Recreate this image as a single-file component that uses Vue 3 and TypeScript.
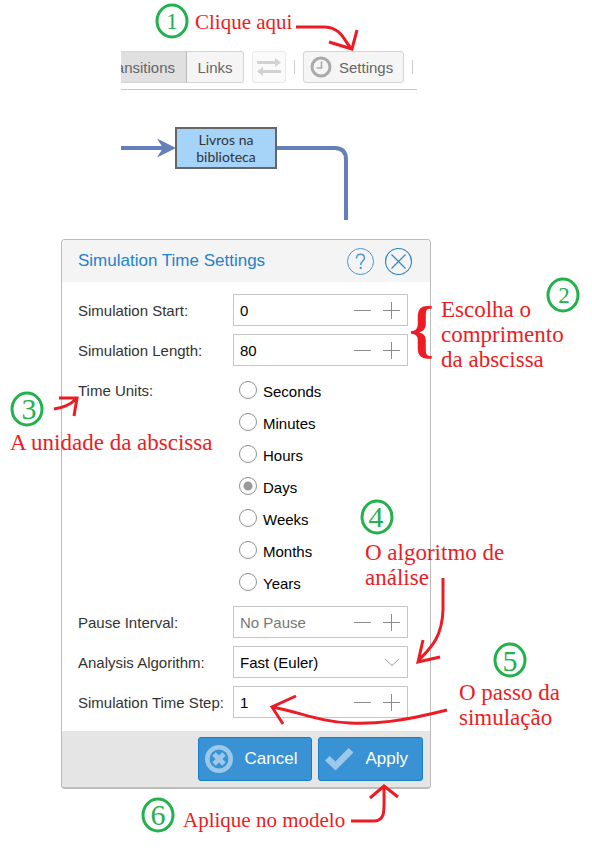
<script setup lang="ts">
import { ref } from 'vue'

interface NumberField {
  id: string
  label: string
  value: string
  placeholder?: string
}

const rangeFields = ref<NumberField[]>([
  { id: 'start', label: 'Simulation Start:', value: '0' },
  { id: 'length', label: 'Simulation Length:', value: '80' },
])
const pauseFields = ref<NumberField[]>([
  { id: 'pause', label: 'Pause Interval:', value: '', placeholder: 'No Pause' },
])
const stepFields = ref<NumberField[]>([
  { id: 'step', label: 'Simulation Time Step:', value: '1' },
])

const units = ['Seconds', 'Minutes', 'Hours', 'Days', 'Weeks', 'Months', 'Years']
const unit = ref('Days')
const algorithm = ref('Fast (Euler)')

function change(field: NumberField, delta: number) {
  field.value = String(Math.max(0, Number(field.value || 0) + delta))
}

const steps = [
  { n: 1, cx: 172, cy: 21, x: 172, y: 29, small: true },
  { n: 2, cx: 563, cy: 295, x: 564, y: 303, small: true },
  { n: 3, cx: 27, cy: 409, x: 29, y: 419, small: false },
  { n: 4, cx: 377, cy: 517, x: 376, y: 527, small: false },
  { n: 5, cx: 510, cy: 660, x: 510, y: 671, small: false },
  { n: 6, cx: 158, cy: 815, x: 158, y: 825, small: false },
]
</script>

<template>
  <main class="page">
    <div class="toolbar">
      <div class="group">
        <button type="button" class="tool active"><span>Transitions</span></button>
        <button type="button" class="tool links">Links</button>
      </div>
      <button type="button" class="tool swap" aria-label="Reverse" disabled>
        <svg width="26" height="20" viewBox="0 0 26 20">
          <path d="M1 4h18V1l6 4.500-6 4.500V7H1zM25 13H7V10l-6 4.500L7 19v-3h18z" fill="#d2d2d2" />
        </svg>
      </button>
      <i class="divider"></i>
      <button type="button" class="tool settings">
        <svg width="22" height="22" viewBox="0 0 22 22" fill="none">
          <circle cx="11" cy="11" r="9" stroke="#aaa" stroke-width="3" />
          <path d="M11.500 5.500v6.500H6.500" stroke="#aaa" stroke-width="1.600" />
        </svg>
        Settings
      </button>
      <i class="divider"></i>
    </div>

    <div class="diagram">
      <svg width="296" height="120" viewBox="0 0 296 120" fill="none">
        <path d="M0 38H42M155 38H214Q225 38 225 50V110" stroke="#6580b8" stroke-width="4" />
        <path d="M55 38L36 28.500L42 38L36 47.500Z" fill="#6580b8" />
      </svg>
      <div class="node">Livros na<br />biblioteca</div>
    </div>

    <form class="dialog" @submit.prevent>
      <header class="head">
        <h1>Simulation Time Settings</h1>
        <button type="button" class="round" aria-label="Help">
          <svg width="27" height="27" viewBox="0 0 27 27" fill="none" stroke="#4c96cf">
            <circle cx="13.500" cy="13.500" r="13" />
            <path d="M9.500 10.500C9.500 7.500 11 6.300 13.500 6.300S17.500 7.800 17.500 10C17.500 13 13.700 13.200 13.700 17" stroke-width="1.500" />
            <path d="M13.700 18.800V21" stroke-width="2" />
          </svg>
        </button>
        <button type="button" class="round" aria-label="Close">
          <svg width="27" height="27" viewBox="0 0 27 27" fill="none" stroke="#3287c8">
            <circle cx="13.500" cy="13.500" r="13" stroke-width="1.200" />
            <path d="M6.500 6.500L20.500 20.500M20.500 6.500L6.500 20.500" stroke-width="1.200" />
          </svg>
        </button>
      </header>

      <div class="body">
        <template v-for="(fields, block) in [rangeFields, pauseFields, stepFields]" :key="block">
          <div v-if="block === 1" class="row" role="radiogroup" aria-labelledby="units-label">
            <span id="units-label" class="label">Time Units:</span>
            <div class="units">
              <label v-for="u in units" :key="u" class="unit">
                <input v-model="unit" type="radio" name="unit" :value="u" />
                <span>{{ u }}</span>
              </label>
            </div>
          </div>
          <div v-if="block === 2" class="row">
            <label class="label" for="algorithm">Analysis Algorithm:</label>
            <div class="field">
              <select id="algorithm" v-model="algorithm">
                <option>Fast (Euler)</option>
                <option>Accurate (RK4)</option>
              </select>
              <svg class="chevron" width="16" height="9" viewBox="0 0 16 9" fill="none">
                <path d="M1 1L8 7.500L15 1" stroke="#999" />
              </svg>
            </div>
          </div>
          <div v-for="f in fields" :key="f.id" class="row">
            <label class="label" :for="f.id">{{ f.label }}</label>
            <div class="field">
              <input :id="f.id" v-model="f.value" type="text" :placeholder="f.placeholder" />
              <button type="button" class="spin" aria-label="Decrease" @click="change(f, -1)">
                <svg width="17" height="17" viewBox="0 0 17 17"><path d="M0 8.500H17" stroke="#8c8c8c" /></svg>
              </button>
              <button type="button" class="spin" aria-label="Increase" @click="change(f, 1)">
                <svg width="17" height="17" viewBox="0 0 17 17"><path d="M0 8.500H17M8.500 0V17" stroke="#8c8c8c" /></svg>
              </button>
            </div>
          </div>
        </template>
      </div>

      <footer class="foot">
        <button type="button" class="action">
          <svg width="28" height="28" viewBox="0 0 28 28" fill="none" stroke="#9dc8ea">
            <circle cx="14" cy="14" r="11.700" stroke-width="4.600" />
            <path d="M9 9L19 19M19 9L9 19" stroke-width="5" />
          </svg>
          Cancel
        </button>
        <button type="submit" class="action">
          <svg width="28" height="28" viewBox="0 0 28 28">
            <path d="M0 15.500L4.500 11L10.500 16.500L23.500 3L28.500 7.500L10.500 25.500Z" fill="#9dc8ea" />
          </svg>
          Apply
        </button>
      </footer>
    </form>

    <svg class="notes" width="592" height="848" viewBox="0 0 592 848">
      <g class="badges">
        <g v-for="s in steps" :key="s.n">
          <ellipse :cx="s.cx" :cy="s.cy" rx="15" ry="16" />
          <text :x="s.x" :y="s.y" :class="{ small: s.small }">{{ s.n }}</text>
        </g>
      </g>
      <g class="arrows">
        <path d="M296 27H325C342 28 344 41 351 48M329 42L352 49L357 30" />
        <path d="M54 409C62 408 70 405 76 399M59 398H77L74 416" />
        <path d="M443 578V610C442 640 428 650 418 661M423 640L418 662L440 657" />
        <path d="M447 710C400 722 375 724 350 723C320 722 300 712 272 707M296 696L272 707L283 724" />
        <path d="M351 821H375C386 820 384 810 384 787M370 798L384 786L398 797" />
      </g>
      <g class="words">
        <text class="small" x="195" y="29">Clique aqui</text>
        <text class="brace" x="409" y="350">{</text>
        <text x="441" y="317">Escolha o</text>
        <text x="441" y="342">comprimento</text>
        <text x="441" y="367">da abscissa</text>
        <text x="10" y="450">A unidade da abscissa</text>
        <text x="365" y="560">O algoritmo de</text>
        <text x="365" y="585">análise</text>
        <text x="459" y="700">O passo da</text>
        <text x="459" y="725">simulação</text>
        <text class="small" x="183" y="827">Aplique no modelo</text>
      </g>
    </svg>
  </main>
</template>

<style>
body {
  margin: 0;
  background: #fff;
}
</style>

<style scoped>
.page {
  position: relative;
  box-sizing: border-box;
  padding: 51px 16px 59px 61px;
  font-family: 'Liberation Sans', Arial, sans-serif;
  font-size: 15px;
  color: #333;
}
button,
input,
select {
  font: inherit;
  margin: 0;
  box-sizing: border-box;
}
svg {
  display: block;
  flex: none;
}
.toolbar {
  display: flex;
  align-items: center;
  max-width: 296px;
  margin-left: 60px;
  padding-bottom: 6px;
  border-bottom: 1px solid #c8c8c8;
}
.group {
  display: flex;
  margin-right: 8px;
}
.tool {
  display: flex;
  align-items: center;
  justify-content: center;
  height: 32px;
  padding: 0 10px;
  border: 1px solid #d4d4d4;
  border-radius: 3px;
  background: #f5f5f5;
  color: #666;
}
.tool.active {
  width: 66px;
  overflow: hidden;
  justify-content: flex-end;
  padding: 0 11px 0 0;
  border-left: 0;
  border-right-color: #bbb;
  border-radius: 0;
  background: #e0e0e0;
}
.tool.links {
  width: 57px;
  border-left: 0;
  border-radius: 0 3px 3px 0;
}
.tool.swap {
  width: 34px;
  padding: 0;
  border-color: #e8e8e8;
  background: #fafafa;
}
.tool.settings {
  width: 101px;
  padding: 0 6px;
  justify-content: flex-start;
  gap: 7px;
}
.divider {
  width: 1px;
  height: 14px;
  margin: 0 8px;
  background: #ccc;
}
.divider:last-child {
  margin-right: 0;
}
.diagram {
  position: relative;
  margin: 20px 0 9px 60px;
}
.node {
  position: absolute;
  left: 54px;
  top: 17px;
  box-sizing: border-box;
  width: 102px;
  height: 42px;
  padding-top: 2px;
  border: 2px solid #666;
  background: #a6d4f9;
  text-align: center;
  font-family: 'Comic Sans MS', Lato, sans-serif;
  font-size: 14px;
  line-height: 17px;
}
.dialog {
  box-sizing: border-box;
  max-width: 370px;
  border: 1px solid #bbb;
  border-bottom-width: 2px;
  border-radius: 4px;
  background: #fff;
  overflow: hidden;
}
.head {
  display: flex;
  align-items: center;
  gap: 11px;
  height: 42px;
  padding: 0 18px 0 16px;
  background: #f4f4f4;
}
h1 {
  flex: 1;
  margin: 0;
  font-size: 17px;
  font-weight: normal;
  color: #1f82cc;
}
.round {
  padding: 0;
  border: 0;
  background: none;
}
.body {
  display: flex;
  flex-direction: column;
  gap: 8px;
  padding: 12px 22px 13px 16px;
}
.row {
  display: flex;
}
.label {
  flex: none;
  width: 155px;
  line-height: 34px;
  height: 32px;
}
.field {
  flex: 1;
  min-width: 0;
  display: flex;
  align-items: center;
  box-sizing: border-box;
  height: 32px;
  padding-right: 1px;
  border: 1px solid #c6c6c6;
  background: #fff;
}
.field input,
.field select {
  flex: 1;
  min-width: 0;
  height: 30px;
  padding: 0 0 0 6px;
  border: 0;
  outline: 0;
  background: none;
  color: #000;
  appearance: none;
}
.field input::placeholder {
  color: #777;
}
.chevron {
  margin-right: 6px;
}
.spin {
  display: flex;
  align-items: center;
  justify-content: center;
  width: 29px;
  height: 30px;
  padding: 0;
  border: 0;
  background: none;
}
.units {
  padding-left: 6px;
}
.unit {
  display: flex;
  align-items: center;
  gap: 6px;
  height: 32px;
  color: #000;
}
.unit span {
  padding-top: 3px;
}
.unit input {
  appearance: none;
  width: 18px;
  height: 18px;
  border: 1px solid #8f8f8f;
  border-radius: 50%;
  background: #fff;
}
.unit input:checked {
  background: radial-gradient(circle, #999 4px, #fff 5px);
}
.foot {
  display: flex;
  justify-content: flex-end;
  gap: 6px;
  padding: 6px 7px;
  background: #e5e5e5;
}
.action {
  display: flex;
  align-items: center;
  gap: 12px;
  height: 44px;
  padding: 0 14px 0 6px;
  border: 1px solid #157fcc;
  border-radius: 3px;
  background: #3892d4;
  color: #fff;
  font-size: 17px;
}
.notes {
  position: absolute;
  left: 0;
  top: 0;
  pointer-events: none;
  font-family: Georgia, 'Liberation Serif', serif;
}
.badges ellipse {
  fill: none;
  stroke: #22b14c;
  stroke-width: 3px;
}
.badges text {
  fill: #22b14c;
  font-size: 30px;
  text-anchor: middle;
}
.badges text.small {
  font-size: 23px;
}
.arrows path {
  fill: none;
  stroke: #ed1c24;
  stroke-width: 3px;
}
.words text {
  fill: #ed1c24;
  font-size: 23px;
}
.words text.small {
  font-size: 21px;
}
.words text.brace {
  font-size: 64px;
  font-weight: bold;
}
</style>
